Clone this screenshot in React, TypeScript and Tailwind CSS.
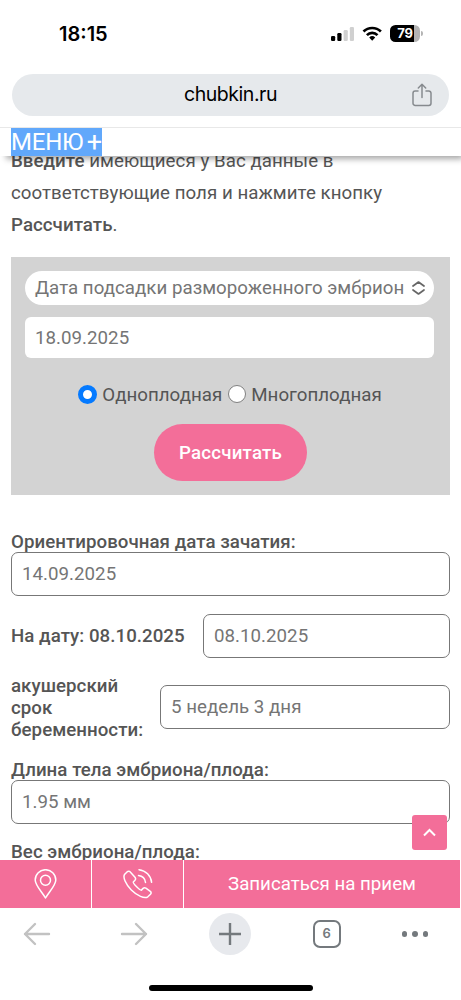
import React from 'react';

const fieldClass =
  'block min-w-0 w-full h-[44px] rounded-[7px] border border-[#777] bg-white px-[10px] text-[18.7px] font-normal tracking-[0.03px] text-[#757575] outline-none';

const StatusBar: React.FC = () => (
  <div className="flex h-[74px] shrink-0 items-start justify-between pl-[59px] pr-[38px] pt-[20px]">
    <span className="font-['Inter'] text-[20px] font-semibold leading-[29px] text-black">18:15</span>
    <div className="flex items-center pt-[5px]">
      <svg width="24" height="17" viewBox="0 0 24 17">
        <rect x="0" y="11" width="4.2" height="5" rx="1.2" fill="#000" />
        <rect x="6.3" y="8" width="4.2" height="8" rx="1.2" fill="#000" />
        <rect x="12.6" y="5" width="4.2" height="11" rx="1.2" fill="#d0d0d0" />
        <rect x="18.8" y="2" width="4.2" height="14" rx="1.2" fill="#d0d0d0" />
      </svg>
      <svg className="ml-[7px]" width="21" height="17" viewBox="0 0 21 17" fill="none" stroke="#000" strokeWidth="2.7">
        <path d="M1.5 6.5a12.5 12.5 0 0 1 17.4 0" />
        <path d="M4.9 10.1a7.6 7.6 0 0 1 10.6 0" />
        <path d="M7.2 12.5a4.4 4.4 0 0 1 6 0L10.2 15.7Z" fill="#000" stroke="none" />
      </svg>
      <div className="ml-[7px] flex items-center">
        <div className="flex h-[17px] w-[30px] items-center justify-center rounded-[5.5px] bg-[linear-gradient(90deg,#000_79%,#b4b4b4_79%)] font-['Inter'] text-[13px] font-bold tracking-[-0.3px] text-white">
          79
        </div>
        <div className="ml-[1px] h-[5px] w-[2px] rounded-r-full bg-[#b4b4b4]" />
      </div>
    </div>
  </div>
);

const AddressBar: React.FC = () => (
  <div className="mx-[12px] grid h-[42px] shrink-0 grid-cols-[1fr_auto_1fr] items-center rounded-full bg-[#e6e9ec]">
    <span />
    <span className="font-['Inter'] text-[19.5px] tracking-[-0.45px] text-black">chubkin.ru</span>
    <svg className="mr-[17px] justify-self-end" width="20" height="24" viewBox="0 0 20 24" fill="none" stroke="#868a8e" strokeWidth="1.5" strokeLinecap="round" strokeLinejoin="round">
      <path d="M6 8H3.2A2.2 2.2 0 0 0 1 10.2v10a2.2 2.2 0 0 0 2.2 2.2h13.6a2.2 2.2 0 0 0 2.2-2.2v-10A2.2 2.2 0 0 0 16.8 8H14" />
      <path d="M10 14.5V1.5M6.3 5 10 1.3 13.7 5" />
    </svg>
  </div>
);

const BookingBar: React.FC = () => (
  <div className="mr-[1px] flex h-[48px] shrink-0 bg-[#f36e99]">
    <a className="flex w-[92px] items-center justify-center border-r border-white">
      <svg width="24" height="30" viewBox="0 0 24 30" fill="none" stroke="#fff" strokeWidth="1.5" strokeLinejoin="round">
        <path d="M11.5 29C8.500 23.500 1.200 16.500 1.200 11a10.300 10.300 0 0 1 20.600 0C21.800 16.500 14.500 23.500 11.500 29Z" />
        <circle cx="11.5" cy="11.3" r="5" />
      </svg>
    </a>
    <a className="flex w-[92px] items-center justify-center border-r border-white">
      <svg width="32" height="32" viewBox="0 0 32 32" fill="none" stroke="#fff" strokeWidth="1.5" strokeLinecap="round" strokeLinejoin="round">
        <path d="M5.3 3.7 2.7 6.3C.5 9 3.7 16.4 9.3 22s13.3 9 16.5 6.8l2.7-2.6c1-1 .8-2-.2-2.8l-4.4-3.2c-1-.7-2-.6-2.8.2l-1.700 1.700c-1 .8-9-7-8.100-8.100l1.700-1.700c.8-.8.9-1.800.2-2.800L8.500 4.200c-.8-1.200-2.100-1.400-3.200-.5Z" />
        <path d="M16.5 7.5c3.7.4 6.6 3.200 7 7M17 1.700c6.800.8 11.900 5.900 12.600 12.600" />
      </svg>
    </a>
    <a className="flex flex-1 items-center justify-center text-[18.7px] text-white">Записаться на прием</a>
  </div>
);

const BrowserToolbar: React.FC = () => (
  <div className="flex h-[92px] shrink-0 flex-col items-center justify-between bg-white pb-[9px] pt-[5px]">
    <div className="grid h-[42px] w-full grid-cols-5 items-center justify-items-center">
      <svg className="ml-[-19px]" width="28" height="24" viewBox="0 0 28 24" fill="none" stroke="#c2c2c2" strokeWidth="2.4" strokeLinecap="round" strokeLinejoin="round">
        <path d="M26 12H2M12 2 2 12l10 10" />
      </svg>
      <svg className="ml-[-9px]" width="28" height="24" viewBox="0 0 28 24" fill="none" stroke="#c2c2c2" strokeWidth="2.4" strokeLinecap="round" strokeLinejoin="round">
        <path d="M2 12h24M16 2l10 10-10 10" />
      </svg>
      <div className="flex size-[42px] items-center justify-center rounded-full bg-[#e7e9ed]">
        <svg width="22" height="22" viewBox="0 0 22 22" stroke="#74797d" strokeWidth="2.4">
          <path d="M11 0v22M0 11h22" />
        </svg>
      </div>
      <div className="ml-[8px] flex size-[28px] items-center justify-center rounded-[7px] border-2 border-[#74797d] font-['Inter'] text-[13px] font-semibold text-[#74797d]">6</div>
      <div className="flex gap-[5px]">
        <span className="size-[5.5px] rounded-full bg-[#74797d]" />
        <span className="size-[5.5px] rounded-full bg-[#74797d]" />
        <span className="size-[5.5px] rounded-full bg-[#74797d]" />
      </div>
    </div>
    <div className="h-[6px] w-[164px] rounded-full bg-black" />
  </div>
);

const App: React.FC = () => {
  return (
    <div className="flex h-[1000px] w-[461px] flex-col overflow-hidden bg-white font-['Roboto',sans-serif] text-[#555]">
      <StatusBar />
      <AddressBar />

      {/* Site header */}
      <header className="relative z-10 mt-[11px] flex h-[29px] shrink-0 border-t border-[#e8e8e8] bg-white pl-[11px] shadow-[4px_5px_6px_-2px_rgba(0,0,0,0.35)]">
        <span className="flex w-[91px] items-center justify-between bg-[#61a8fb] text-[24px] leading-[28px] tracking-[-0.2px] text-white">
          МЕНЮ <span className="text-[27px] tracking-normal">+</span>
        </span>
      </header>

      {/* Page content */}
      <main className="relative min-h-0 flex-1 overflow-hidden px-[11px]">
        <p className="mt-[-11px] text-[18.7px] leading-[32px] tracking-[0.05px]">
          <b className="font-medium">Введите</b> имеющиеся у Вас данные в<br />
          соответствующие поля и нажмите кнопку<br />
          <b className="font-medium">Рассчитать</b>.
        </p>

        <form className="mt-[16px] flex h-[238px] flex-col items-center bg-[#d3d3d3] pl-[14px] pr-[16px] pt-[14px]">
          <div className="flex h-[34px] w-full items-center justify-between rounded-full bg-white pl-[10px] pr-[9px] text-[18.7px] tracking-[0.03px] text-[#757575]">
            <span className="whitespace-nowrap">Дата подсадки размороженного эмбрион</span>
            <svg width="13" height="14" viewBox="0 0 13 14" fill="none" stroke="#666" strokeWidth="1.7" strokeLinecap="round" strokeLinejoin="round">
              <path d="M1 5 6.5 1 12 5M1 9l5.5 4L12 9" />
            </svg>
          </div>
          <input
            className="mt-[12px] h-[41px] w-full rounded-[6px] bg-white px-[10px] text-[18.7px] tracking-[0.03px] text-[#757575] outline-none"
            defaultValue="18.09.2025"
          />
          <div className="ml-px mt-[24px] flex h-[24px] items-center text-[18.7px] tracking-[0.03px]">
            <span className="size-[19px] rounded-full border-[5.5px] border-[#057aff] bg-white" />
            <span className="ml-[5px] pt-[2px]">Одноплодная</span>
            <span className="ml-[6px] size-[18px] rounded-full border-[1.5px] border-[#808080] bg-white" />
            <span className="ml-[5px] pt-[2px]">Многоплодная</span>
          </div>
          <button type="button" className="ml-[2px] mt-[18px] h-[57px] w-[153px] rounded-full bg-[#f36e99] pt-[2px] text-[18.7px] font-medium tracking-[0.2px] text-white">
            Рассчитать
          </button>
        </form>

        <div className="mt-[36px] text-[18.7px] font-medium leading-[22px] tracking-[0.04px]">
          <label className="block h-[21px]">Ориентировочная дата зачатия:</label>
          <input className={fieldClass} defaultValue="14.09.2025" />

          <div className="mt-[18px] flex items-center">
            <label className="w-[192px] shrink-0">На дату: 08.10.2025</label>
            <input className={fieldClass} defaultValue="08.10.2025" />
          </div>

          <div className="mt-[16px] flex items-center">
            <label className="w-[149px] shrink-0 translate-y-px">
              акушерский<br />срок<br />беременности:
            </label>
            <input className={fieldClass} defaultValue="5 недель 3 дня" />
          </div>

          <label className="mt-[19px] block h-[21px]">Длина тела эмбриона/плода:</label>
          <input className={fieldClass} defaultValue="1.95 мм" />
          <label className="mt-[17px] block">Вес эмбриона/плода:</label>
        </div>

        {/* Scroll to top */}
        <button type="button" className="absolute bottom-[10px] right-[14px] flex size-[35px] items-center justify-center rounded-[3px] bg-[#f36e99]">
          <svg width="13" height="9" viewBox="0 0 13 9" fill="none" stroke="#fff" strokeWidth="2">
            <path d="M1 7.5 6.5 2 12 7.5" />
          </svg>
        </button>
      </main>

      <BookingBar />
      <BrowserToolbar />
    </div>
  );
};

export default App;
